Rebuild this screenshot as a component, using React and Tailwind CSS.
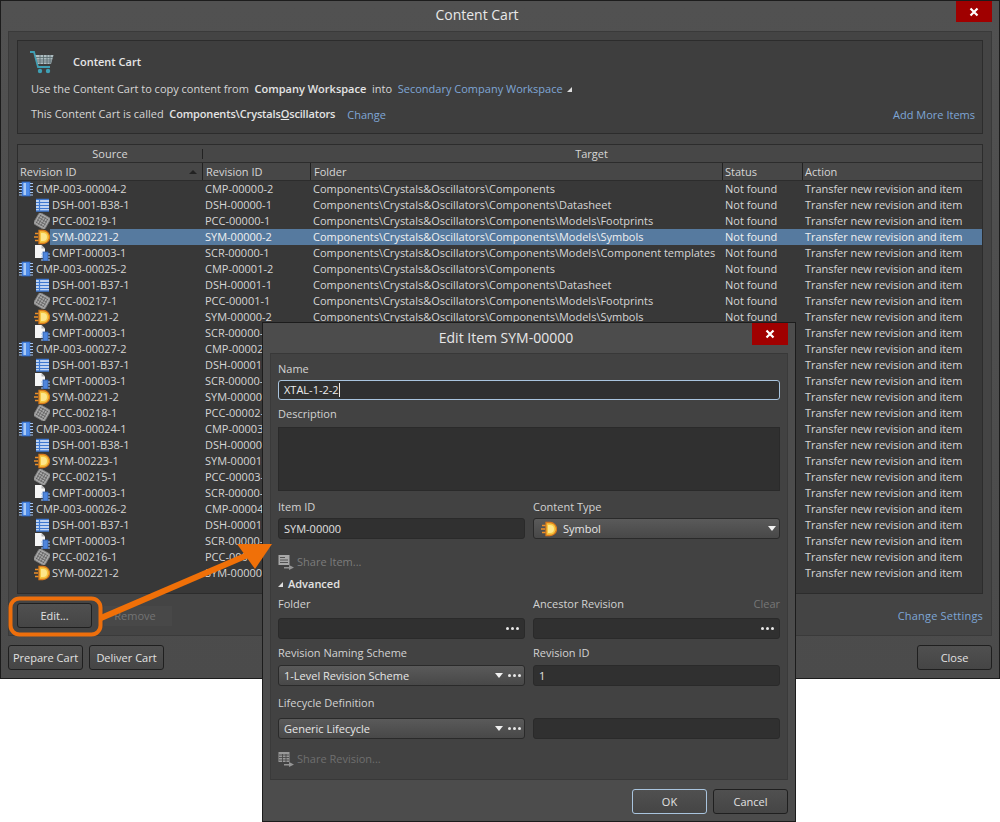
const font = { fontFamily: '"Open Sans", "Noto Sans", sans-serif' };

function CompIcon() {
  return (
    <svg width="16" height="16" viewBox="0 0 16 16" className="shrink-0">
      <rect x="4" y="1" width="8" height="14" fill="#4d8be8" stroke="#2f62b8" strokeWidth="0.8" />
      <rect x="5.5" y="2" width="2.5" height="12" fill="#a9c9f6" />
      <path d="M1 2.5h3M1 5.5h3M1 8.5h3M1 11.5h3M1 14h3M12 2.5h3M12 5.5h3M12 8.5h3M12 11.5h3M12 14h3" stroke="#a6c6f2" strokeWidth="1.1" />
    </svg>
  );
}
function DshIcon() {
  return (
    <svg width="16" height="16" viewBox="0 0 16 16" className="shrink-0">
      <rect x="2" y="2" width="13" height="12" fill="#eef3fb" />
      <path d="M2 2.5h13M2 5.5h13M2 8.5h13M2 11.5h13M2 14h13" stroke="#3f78cf" strokeWidth="1.3" />
      <path d="M5.5 2v12" stroke="#3f78cf" strokeWidth="1.2" />
    </svg>
  );
}
function PccIcon() {
  return (
    <svg width="16" height="16" viewBox="0 0 16 16" className="shrink-0">
      <g transform="rotate(30 8 8)">
        <rect x="1.5" y="1.5" width="13" height="13" rx="1.5" fill="#a8a8a8" stroke="#777" strokeWidth="0.8" />
        <path d="M3 4h10M3 6.7h10M3 9.4h10M3 12h10M4 3v10M6.7 3v10M9.4 3v10M12 3v10" stroke="#5f5f5f" strokeWidth="0.7" />
      </g>
    </svg>
  );
}
function SymIcon() {
  return (
    <svg width="16" height="16" viewBox="0 0 16 16" className="shrink-0">
      <path d="M5 1.5h4a6.5 6.5 0 0 1 0 13H5z" fill="#f5c53f" stroke="#d9791a" strokeWidth="1.3" />
      <path d="M7 4h2a4 4 0 0 1 0 8H7z" fill="#fde68a" />
      <path d="M1 4.5h3.5M0 8h4M1 11.5h3.5" stroke="#ec8f28" strokeWidth="1.4" />
    </svg>
  );
}
function CmptIcon() {
  return (
    <svg width="16" height="16" viewBox="0 0 16 16" className="shrink-0">
      <path d="M1 0h6.5L11 3.5V13H1z" fill="#f5f5f5" />
      <path d="M7.5 0v3.5H11z" fill="#b5b5b5" />
      <rect x="9" y="7" width="5" height="9" fill="#4f86dc" stroke="#2c5aa8" strokeWidth="0.8" />
      <path d="M7 9h2M7 12h2M7 15h2M14 9h2M14 12h2M14 15h2" stroke="#9cc0f0" />
    </svg>
  );
}
const icons = { c: CompIcon, d: DshIcon, p: PccIcon, s: SymIcon, t: CmptIcon };
const base = "Components\\Crystals&Oscillators\\Components";
const folders = {
  c: base,
  d: base + "\\Datasheet",
  p: base + "\\Models\\Footprints",
  s: base + "\\Models\\Symbols",
  t: base + "\\Models\\Component templates",
};
const rows = [
  ["c", "CMP-003-00004-2", "CMP-00000-2"],
  ["d", "DSH-001-B38-1", "DSH-00000-1"],
  ["p", "PCC-00219-1", "PCC-00000-1"],
  ["s", "SYM-00221-2", "SYM-00000-2"],
  ["t", "CMPT-00003-1", "SCR-00000-1"],
  ["c", "CMP-003-00025-2", "CMP-00001-2"],
  ["d", "DSH-001-B37-1", "DSH-00001-1"],
  ["p", "PCC-00217-1", "PCC-00001-1"],
  ["s", "SYM-00221-2", "SYM-00000-2"],
  ["t", "CMPT-00003-1", "SCR-00000-1"],
  ["c", "CMP-003-00027-2", "CMP-00002-2"],
  ["d", "DSH-001-B37-1", "DSH-00001-1"],
  ["t", "CMPT-00003-1", "SCR-00000-1"],
  ["s", "SYM-00221-2", "SYM-00000-2"],
  ["p", "PCC-00218-1", "PCC-00002-1"],
  ["c", "CMP-003-00024-1", "CMP-00003-1"],
  ["d", "DSH-001-B38-1", "DSH-00000-1"],
  ["s", "SYM-00223-1", "SYM-00001-1"],
  ["p", "PCC-00215-1", "PCC-00003-1"],
  ["t", "CMPT-00003-1", "SCR-00000-1"],
  ["c", "CMP-003-00026-2", "CMP-00004-2"],
  ["d", "DSH-001-B37-1", "DSH-00001-1"],
  ["t", "CMPT-00003-1", "SCR-00000-1"],
  ["p", "PCC-00216-1", "PCC-00004-1"],
  ["s", "SYM-00221-2", "SYM-00000-2"],
];

function Row({ r, selected, covered }) {
  const Icon = icons[r[0]];
  const root = r[0] === "c";
  return (
    <div className={`flex h-4 items-center leading-4 ${root ? "" : "pl-[16px]"}`}>
      <Icon />
      <div className={`flex h-4 grow items-center ${selected ? "bg-[#567a9f] text-[#f0f0f0]" : ""}`}>
        <div className={`pl-[2px] ${root ? "w-[171px]" : "w-[155px]"}`}>{r[1]}</div>
        <div className="w-[108px]">{r[2]}</div>
        <div className="w-[412px] whitespace-nowrap">{covered ? "" : folders[r[0]]}</div>
        <div className="w-[80px]">{covered ? "" : "Not found"}</div>
        <div className="whitespace-nowrap tracking-[-0.05px]">Transfer new revision and item</div>
      </div>
    </div>
  );
}

function HeadCell({ className = "", children }) {
  return <div className={`flex h-full items-center border-l border-[#222] ${className}`}>{children}</div>;
}

function Btn({ className = "", children }) {
  return (
    <button className={`flex h-[25px] w-[75px] items-center justify-center rounded-[3px] border border-[#1f1f1f] bg-gradient-to-b from-[#505050] to-[#454545] pt-px text-[#e2e2e2] ${className}`}>
      {children}
    </button>
  );
}

function CloseX({ className = "" }) {
  return (
    <div className={`flex items-center justify-center bg-[#a00000] ${className}`}>
      <svg width="10" height="10" viewBox="0 0 10 10">
        <path d="M1.5 1.5l7 7M8.5 1.5l-7 7" stroke="#fff" strokeWidth="2.2" />
      </svg>
    </div>
  );
}

function Dots() {
  return (
    <div className="flex items-center gap-[2px]">
      <span className="size-[3px] rounded-full bg-[#e8e8e8]" />
      <span className="size-[3px] rounded-full bg-[#e8e8e8]" />
      <span className="size-[3px] rounded-full bg-[#e8e8e8]" />
    </div>
  );
}
function Caret() {
  return <span className="h-0 w-0 border-x-[4.5px] border-t-[5px] border-x-transparent border-t-[#f0f0f0]" />;
}
function Field({ children, className = "" }) {
  return (
    <div className={`flex h-[21px] items-center rounded-[3px] border border-[#2a2a2a] bg-[#303030] px-[5px] text-[#e0e0e0] ${className}`}>
      {children}
    </div>
  );
}
function Combo({ children, className = "" }) {
  return (
    <div className={`flex h-[21px] items-center rounded-[3px] border border-[#2a2a2a] bg-gradient-to-b from-[#5a5a5a] to-[#484848] pl-[5px] pr-[3px] text-[#e6e6e6] ${className}`}>
      {children}
    </div>
  );
}
function ShareIcon({ grid }) {
  return (
    <svg width="16" height="16" viewBox="0 0 16 16" className="shrink-0">
      <rect x="0.5" y="1" width="11" height="10" fill={grid ? "#989898" : "#a8a8a8"} />
      <path d={grid ? "M1 4h10M1 6.5h10M1 9h10M4.5 3v8M8 3v8" : "M2 3.5h5M2 6h8M2 8.5h8"} stroke="#4a4a4a" strokeWidth="0.9" />
      <path d="M6 13h5V11l5 2.5L11 16v-1.5H6z" fill="#949494" />
    </svg>
  );
}

function Dialog() {
  return (
    <div className="absolute left-[262px] top-[322px] flex h-[500px] w-[534px] flex-col border border-[#1c1c1c] bg-[#4c4c4c]">
      <div className="relative h-[30px] shrink-0 pr-[46px] pt-[5px] text-center text-[14px] leading-[20px] text-[#e8e8e8]">
        Edit Item SYM-00000
        <CloseX className="absolute right-[7px] top-0 h-[22px] w-[36px]" />
      </div>
      <div className="mx-[7px] flex h-[427px] shrink-0 flex-col border border-x-[#3a3a3a] border-b-[#383838] border-t-[#383838] bg-[#424242] px-[7px] text-[#d2d2d2]">
        <div className="mt-[7px] h-[16px] leading-[16px]">Name</div>
        <div className="mt-[3px] flex h-[20px] items-center rounded-[3px] border border-[#a9c4de] bg-[#303030] px-[5px] text-[#ececec]">
          <span>XTAL-1-2-2</span>
          <span className="h-[14px] w-px bg-[#ececec]" />
        </div>
        <div className="mt-[6px] h-[16px] leading-[16px]">Description</div>
        <div className="mt-[5px] h-[64px] border border-[#2a2a2a] bg-[#303030]" />
        <div className="mt-[8px] grid grid-cols-[247px_247px] gap-x-[8px]">
          <div className="h-[16px] leading-[16px]">Item ID</div>
          <div className="h-[16px] leading-[16px]">Content Type</div>
          <Field className="mt-[3px]">SYM-00000</Field>
          <Combo className="mt-[3px]">
            <span className="ml-[2px]"><SymIcon /></span>
            <span className="ml-[6px] grow">Symbol</span>
            <Caret />
          </Combo>
        </div>
        <div className="mt-[15px] flex h-[16px] items-center gap-[3px] text-[#7c7c7c]">
          <ShareIcon />
          <span>Share Item...</span>
        </div>
        <div className="mt-[6px] flex h-[16px] items-center gap-[5px] font-semibold text-[#e2e2e2]">
          <span className="h-0 w-0 border-b-[5px] border-l-[5px] border-b-[#ddd] border-l-transparent" />
          <span>Advanced</span>
        </div>
        <div className="mt-[4px] grid grid-cols-[247px_247px] gap-x-[8px]">
          <div className="h-[16px] leading-[16px]">Folder</div>
          <div className="flex h-[16px] justify-between leading-[16px]">
            <span>Ancestor Revision</span>
            <span className="text-[#777]">Clear</span>
          </div>
          <Field className="mt-[6px] justify-end"><Dots /></Field>
          <Field className="mt-[6px] justify-end"><Dots /></Field>
          <div className="mt-[6px] h-[16px] leading-[16px]">Revision Naming Scheme</div>
          <div className="mt-[6px] h-[16px] leading-[16px]">Revision ID</div>
          <Combo className="mt-[4px]">
            <span className="grow">1-Level Revision Scheme</span>
            <Caret />
            <span className="ml-[5px]"><Dots /></span>
          </Combo>
          <Field className="mt-[4px]">1</Field>
          <div className="col-span-2 mt-[9px] h-[16px] leading-[16px]">Lifecycle Definition</div>
          <Combo className="mt-[7px]">
            <span className="grow">Generic Lifecycle</span>
            <Caret />
            <span className="ml-[5px]"><Dots /></span>
          </Combo>
          <Field className="mt-[7px]" />
        </div>
        <div className="mt-[12px] flex h-[16px] items-center gap-[3px] text-[#6f6f6f]">
          <ShareIcon grid />
          <span>Share Revision...</span>
        </div>
      </div>
      <div className="mr-[7px] mt-[9px] flex justify-end gap-[6px]">
        <Btn className="border-[#a9c4de]">OK</Btn>
        <Btn>Cancel</Btn>
      </div>
    </div>
  );
}

export default function App() {
  return (
    <div className="relative h-[822px] w-[1000px] overflow-hidden bg-white text-[11px] leading-4 text-[#d6d6d6]" style={font}>
      <div className="flex h-[679px] w-[1000px] flex-col border border-[#1c1c1c] bg-gradient-to-b from-[#515151] to-[#4b4b4b]">
        <div className="relative h-[30px] shrink-0 pr-[46px] pt-[4px] text-center text-[14px] leading-[20px] text-[#e8e8e8]">
          Content Cart
          <CloseX className="absolute right-[7px] top-0 h-[21px] w-[36px]" />
        </div>
        <div className="mx-[7px] flex h-[605px] shrink-0 flex-col border border-[#3a3a3a] bg-[#444] px-[8px] pt-[8px]">
          <div className="relative h-[94px] shrink-0 border border-[#2c2c2c] bg-[#3e3e3e] pl-[13px]">
            <div className="flex h-[38px] items-center pt-[4px]">
              <svg width="26" height="26" viewBox="0 0 26 26" className="-ml-[2px] shrink-0">
                <path d="M1 3h4l4 15h12" fill="none" stroke="#3fa0b5" strokeWidth="1.8" />
                <path d="M6.5 6h18l-2.5 9H9z" fill="#aebdc1" />
                <path d="M7 8.5h17M8 11h15M8.5 13h14M11 6v9M14.5 6v9M18 6v9M21 6v9" stroke="#57686c" strokeWidth="0.8" />
                <circle cx="11" cy="22" r="2.2" fill="#3fa0b5" />
                <circle cx="19" cy="22" r="2.2" fill="#3fa0b5" />
              </svg>
              <span className="ml-[18px] font-semibold text-[#e6e6e6]">Content Cart</span>
            </div>
            <div className="mt-[2px] flex h-[16px] items-center whitespace-pre">
              <span>Use the Content Cart to copy content from  </span>
              <b className="font-semibold text-[#e4e4e4]">Company Workspace</b>
              <span>  into  </span>
              <span className="text-[#7ea6d6]">Secondary Company Workspace</span>
              <span className="ml-[4px] h-0 w-0 border-b-[5px] border-l-[5px] border-b-[#ddd] border-l-transparent" />
            </div>
            <div className="mt-[9px] flex h-[16px] items-center whitespace-pre">
              <span>This Content Cart is called  </span>
              <b className="font-semibold tracking-[-0.15px] text-[#e4e4e4]">Components\Crystals<u>O</u>scillators</b>
              <span className="ml-[12px] mt-[2px] text-[#7ea6d6]">Change</span>
              <span className="ml-auto mt-[2px] pr-[7px] text-[#7ea6d6]">Add More Items</span>
            </div>
          </div>
          <div className="mt-[10px] h-[450px] shrink-0 overflow-hidden border border-[#2c2c2c] bg-[#383838]">
            <div className="flex h-[18px] items-center border-b border-[#2c2c2c] bg-[#474747]">
              <div className="w-[184px] text-center">Source</div>
              <div className="h-[10px] w-px bg-[#222]" />
              <div className="grow pr-[2px] text-center">Target</div>
            </div>
            <div className="flex h-[18px] items-center border-b border-[#2c2c2c] bg-[#474747]">
              <div className="flex w-[184px] items-center justify-between pl-[2px] pr-[5px]">
                <span>Revision ID</span>
                <span className="h-0 w-0 border-x-[4px] border-b-[4px] border-x-transparent border-b-[#222]" />
              </div>
              <HeadCell className="w-[108px] pl-[3px]">Revision ID</HeadCell>
              <HeadCell className="w-[412px] pl-[3px]">Folder</HeadCell>
              <HeadCell className="w-[80px] pl-[2px]">Status</HeadCell>
              <HeadCell className="grow pl-[2px]">Action</HeadCell>
            </div>
            <div>
              {rows.map((r, i) => <Row key={i} r={r} selected={i === 3} covered={i >= 9} />)}
            </div>
          </div>
          <div className="mt-[9px] flex h-[25px] items-center">
            <Btn>Edit...</Btn>
            <div className="ml-[12px] flex h-[20px] w-[68px] items-center justify-center bg-[#484848] pr-[6px] text-[#747474]">Remove</div>
            <span className="ml-auto tracking-[0.2px] text-[#7ea6d6]">Change Settings</span>
          </div>
        </div>
        <div className="mx-[7px] mt-[9px] flex gap-[6px]">
          <Btn>Prepare Cart</Btn>
          <Btn>Deliver Cart</Btn>
          <Btn className="ml-auto">Close</Btn>
        </div>
      </div>
      <Dialog />
      <svg className="pointer-events-none absolute left-0 top-0" width="1000" height="822" viewBox="0 0 1000 822">
        <rect x="10.5" y="598.5" width="90" height="36" rx="9" fill="none" stroke="#ee6f0c" strokeWidth="4" />
        <path d="M101 618L250 554" stroke="#f07008" strokeWidth="6" />
        <path d="M237 544L272 544L255 569Z" fill="#f07008" />
      </svg>
    </div>
  );
}
